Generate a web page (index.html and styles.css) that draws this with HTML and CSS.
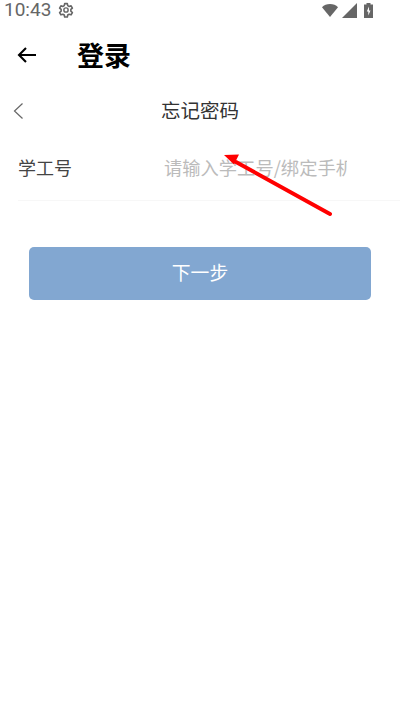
FILE: index.html
```html
<!DOCTYPE html>
<html lang="zh-CN">
<head>
<meta charset="utf-8">
<title>登录</title>
<link rel="stylesheet" href="styles.css">
</head>
<body>
<div class="screen">
  <div class="status">
    <div class="status-left">
      <span class="time">10:43</span>
      <svg class="gear" width="16" height="16" viewBox="0 0 24 24"><path fill="none" stroke="#666" stroke-width="2.4" stroke-linejoin="round" d="M10 2.5h4l.6 3 2.1 1.2 2.9-1 2 3.5-2.3 2v2.6l2.3 2-2 3.5-2.9-1-2.1 1.2-.6 3h-4l-.6-3-2.1-1.2-2.9 1-2-3.5 2.3-2v-2.6l-2.3-2 2-3.5 2.9 1 2.1-1.2z"/><circle cx="12" cy="12" r="3.2" fill="none" stroke="#666" stroke-width="2.2"/></svg>
    </div>
    <div class="status-right">
      <svg class="wifi" width="16" height="13" viewBox="0 0 16 13"><path fill="#666" d="M0 3.2C2 1.2 4.8 0 8 0s6 1.200 8 3.200L8 13z"/></svg>
      <svg class="signal" width="15" height="15" viewBox="0 0 15 15"><path fill="#666" d="M15 0v15H0z"/></svg>
      <svg class="battery" width="9" height="15" viewBox="0 0 9 15"><path fill="#666" fill-rule="evenodd" d="M2.500 0h4v1.500H9V15H0V1.500h2.500zM5 3.500 2.800 8.500h1.500v4L6.500 7.500H5z"/></svg>
    </div>
  </div>
  <header class="appbar">
    <svg class="back" width="24" height="24" viewBox="0 0 24 24"><path fill="none" stroke="#000" stroke-width="2.100" d="M21 12H4M11 5l-7 7 7 7"/></svg>
    <h1 class="appbar-title">登录</h1>
  </header>
  <div class="subbar">
    <svg class="chev" width="12" height="18" viewBox="0 0 12 18"><path fill="none" stroke="#666" stroke-width="1.200" d="M10.500 1.500 2.500 9l8 7.500"/></svg>
    <h2 class="subbar-title">忘记密码</h2>
  </div>
  <div class="field">
    <span class="label">学工号</span>
    <span class="placeholder">请输入学工号/绑定手机号</span>
  </div>
  <div class="action">
    <button class="next" type="button">下一步</button>
  </div>
  <svg class="mark" width="403" height="722" viewBox="0 0 403 722"><path fill="none" stroke="#f00" stroke-width="4" stroke-linecap="round" d="M330 214 236 162"/><path fill="#f00" d="M224 155l15-.500-5 10z"/></svg>
</div>
</body>
</html>
```

FILE: styles.css
```css
* { box-sizing: border-box; }
html, body { margin: 0; padding: 0; background: #fff; }
.screen {
  position: relative;
  width: 403px;
  height: 722px;
  overflow: hidden;
  font-family: "Noto Sans CJK SC", Roboto, sans-serif;
}
.status {
  height: 20px;
  padding: 0 30px 0 4px;
  display: flex;
  align-items: center;
  justify-content: space-between;
  color: #666;
}
.status-left { display: flex; align-items: center; gap: 7px; }
.time { font-family: Roboto, sans-serif; font-size: 19px; line-height: 22px; }
.status-right { display: flex; align-items: center; gap: 4px; }
.signal { margin-right: 3px; }
.appbar {
  height: 70px;
  display: flex;
  align-items: center;
  padding-left: 15px;
  gap: 39px;
}
.back { flex: none; }
.appbar-title { margin: 0 0 0 -1px; font-size: 27px; line-height: 36px; font-weight: 700; color: #000; }
.subbar {
  height: 42px;
  position: relative;
  display: flex;
  align-items: center;
  justify-content: center;
}
.chev { position: absolute; left: 12px; top: 12px; }
.subbar-title { margin: -2px 0 0 -3px; font-size: 19.500px; line-height: 26px; font-weight: 400; color: #333; }
.field {
  margin: 0 3px 0 18px;
  height: 69px;
  padding-top: 1px;
  display: flex;
  align-items: center;
  border-bottom: 1px solid #f7f7f7;
}
.label { width: 146px; flex: none; font-size: 18px; color: #444; }
.placeholder {
  width: 183px;
  overflow: hidden;
  white-space: nowrap;
  font-size: 18.300px;
  color: #bbb;
}
.action { padding: 46px 32px 0 29px; }
.next {
  display: block;
  width: 100%;
  height: 53px;
  padding: 0 0 5px;
  border: 0;
  border-radius: 5px;
  background: #82a7d1;
  color: #fff;
  font: 400 18.800px "Noto Sans CJK SC", sans-serif;
}
.mark { position: absolute; left: 0; top: 0; pointer-events: none; }
```
